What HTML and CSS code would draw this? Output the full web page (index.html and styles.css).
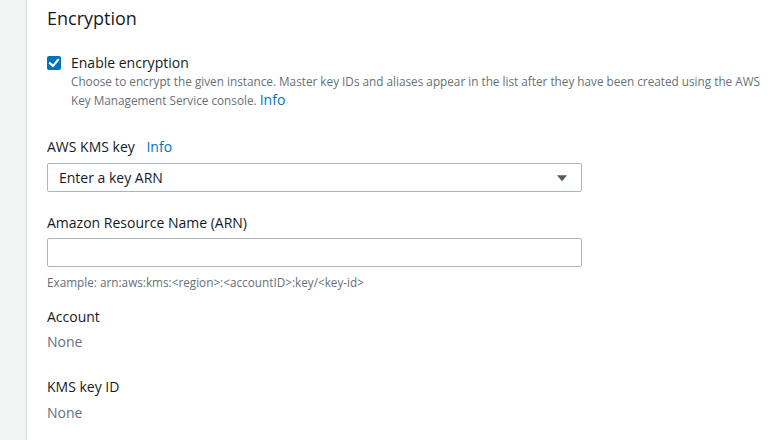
FILE: index.html
```html
<!DOCTYPE html>
<html>
<head>
<meta charset="utf-8">
<link rel="stylesheet" href="styles.css">
</head>
<body>
<div class="layout">
  <aside class="rail"></aside>
  <main class="content">
    <h2 class="title">Encryption</h2>
    <div class="check-row">
      <span class="checkbox">
        <svg width="14" height="14" viewBox="0 0 14 14"><path d="M3 7.2 L6 10 L11 4" fill="none" stroke="#fff" stroke-width="2.2" stroke-linecap="square"/></svg>
      </span>
      <div class="check-text">
        <div class="check-label">Enable encryption</div>
        <div class="desc">Choose to encrypt the given instance. Master key IDs and aliases appear in the list after they have been created using the AWS Key Management Service console. <a class="info big">Info</a></div>
      </div>
    </div>

    <div class="field kms">
      <div class="label">AWS KMS key <a class="info">Info</a></div>
      <div class="select">
        <span>Enter a key ARN</span>
        <svg class="caret" width="12" height="8" viewBox="0 0 12 8"><path d="M1 1.2 H11 L6 7.2 Z" fill="#545b64"/></svg>
      </div>
    </div>

    <div class="field arn">
      <div class="label">Amazon Resource Name (ARN)</div>
      <div class="input"></div>
      <div class="hint">Example: arn:aws:kms:&lt;region&gt;:&lt;accountID&gt;:key/&lt;key-id&gt;</div>
    </div>

    <div class="field kv">
      <div class="label">Account</div>
      <div class="value">None</div>
    </div>

    <div class="field kv">
      <div class="label">KMS key ID</div>
      <div class="value">None</div>
    </div>
  </main>
</div>
</body>
</html>
```
FILE: styles.css
```css
* { box-sizing: border-box; }
html, body { margin: 0; padding: 0; height: 100%; }
body {
  font-family: "Open Sans", "Liberation Sans", sans-serif;
  color: #16191f;
  background: #fff;
}
.layout { display: flex; height: 440px; overflow: hidden; }
.rail {
  width: 27px;
  flex: none;
  background: #f2f3f3;
  border-right: 1px solid #d5dbdb;
}
.content { flex: 1; padding: 0 0 0 20px; }
.title {
  margin: 0;
  padding-top: 6px;
  font-size: 18px;
  font-weight: 400;
  line-height: 24px;
  color: #16191f;
}
.check-row { display: flex; margin-top: 23px; }
.checkbox {
  width: 14px; height: 14px;
  margin-top: 3px;
  background: #0073bb;
  border-radius: 2px;
  display: flex;
  flex: none;
}
.check-text { margin-left: 10px; flex: 1; }
.check-label { font-size: 14px; line-height: 19px; }
.desc { font-size: 11.75px; line-height: 19px; color: #687078; padding-right: 10px; }
.info { color: #0073bb; text-decoration: none; font-size: 14px; margin-left: 2px; }
.info.big { margin-left: 0; line-height: 1; }
.label { font-size: 14px; line-height: 20px; }
.label .info { margin-left: 8px; }
.kms { margin-top: 27px; }
.select {
  margin-top: 6px;
  width: 535px;
  height: 29px;
  border: 1px solid #aab7b8;
  border-radius: 2px;
  display: flex;
  align-items: center;
  justify-content: space-between;
  padding: 0 13px 0 11px;
  font-size: 14px;
}
.caret { display: block; }
.arn { margin-top: 21px; }
.input {
  margin-top: 5px;
  width: 535px;
  height: 29px;
  border: 1px solid #aab7b8;
  border-radius: 2px;
}
.hint { font-size: 11.75px; line-height: 16px; color: #687078; margin-top: 7px; }
.kv { margin-top: 17px; }
.kv + .kv { margin-top: 25px; }
.value { font-size: 14px; line-height: 20px; color: #687078; margin-top: 5px; }
.kv + .kv .value { margin-top: 6px; }
```
